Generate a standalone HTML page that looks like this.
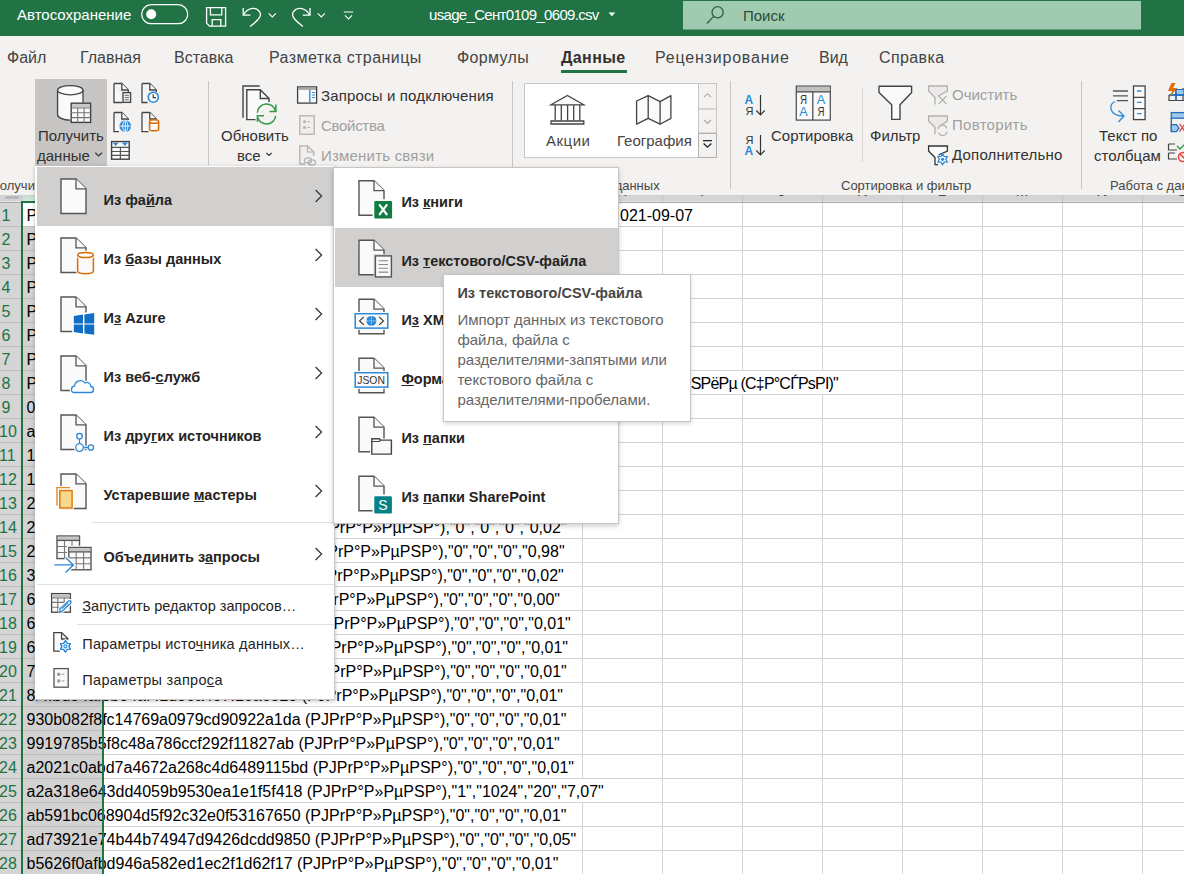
<!DOCTYPE html>
<html><head><meta charset="utf-8">
<style>
*{margin:0;padding:0;box-sizing:border-box}
html,body{width:1184px;height:874px;overflow:hidden;background:#fff;font-family:"Liberation Sans",sans-serif;color:#323130}
.a{position:absolute;white-space:nowrap}
svg{position:absolute;overflow:visible}
#title{position:absolute;left:0;top:0;width:1184px;height:36px;background:#217346}
#tabs{position:absolute;left:0;top:36px;width:1184px;height:40px;background:#f3f2f1}
#ribbon{position:absolute;left:0;top:76px;width:1184px;height:119px;background:#f3f2f1}
.tab{font-size:16px;color:#444;top:49px}
.rl{font-size:15px;color:#323130}
.dis{color:#a19f9d}
.gl{font-size:13px;color:#484644;top:177.5px}
.sep{position:absolute;width:1px;background:#c8c6c4}
.cell{font-size:16px;color:#000}
.rh{font-size:16px;color:#217346;width:14px;text-align:center}
.mi{font-size:14.5px;font-weight:bold;color:#252423}
.mr{font-size:14.5px;color:#252423}
</style></head><body>
<!-- ===== GRID ===== -->
<div id="grid" style="position:absolute;left:0;top:0;width:1184px;height:874px">
<div class="a" style="left:0;top:195px;width:1184px;height:7px;background:linear-gradient(#cdcdcd 0,#d4d4d4 1px,#d4d4d4 5.5px,#e6e6e6 6px)"></div>
<div class="a" style="left:23px;top:195px;width:80px;height:7px;background:linear-gradient(#c6dccf,#d3ecdd)"></div>
<div class="a" style="left:42px;width:40px;text-align:center;top:182px;font-size:15px;color:#444">A</div>
<div class="a" style="left:122px;width:40px;text-align:center;top:182px;font-size:15px;color:#444">B</div>
<div class="a" style="left:202px;width:40px;text-align:center;top:182px;font-size:15px;color:#444">C</div>
<div class="a" style="left:282px;width:40px;text-align:center;top:182px;font-size:15px;color:#444">D</div>
<div class="a" style="left:362px;width:40px;text-align:center;top:182px;font-size:15px;color:#444">E</div>
<div class="a" style="left:442px;width:40px;text-align:center;top:182px;font-size:15px;color:#444">F</div>
<div class="a" style="left:522px;width:40px;text-align:center;top:182px;font-size:15px;color:#444">G</div>
<div class="a" style="left:602px;width:40px;text-align:center;top:182px;font-size:15px;color:#444">H</div>
<div class="a" style="left:682px;width:40px;text-align:center;top:182px;font-size:15px;color:#444">I</div>
<div class="a" style="left:762px;width:40px;text-align:center;top:182px;font-size:15px;color:#444">J</div>
<div class="a" style="left:842px;width:40px;text-align:center;top:182px;font-size:15px;color:#444">K</div>
<div class="a" style="left:922px;width:40px;text-align:center;top:182px;font-size:15px;color:#444">L</div>
<div class="a" style="left:1002px;width:40px;text-align:center;top:182px;font-size:15px;color:#444">M</div>
<div class="a" style="left:1082px;width:40px;text-align:center;top:182px;font-size:15px;color:#444">N</div>
<div class="a" style="left:1162px;width:40px;text-align:center;top:182px;font-size:15px;color:#444">O</div>
<div class="a" style="left:0;top:203px;width:21px;height:671px;background:#d5d5d5"></div>
<div class="a" style="left:23px;top:203px;width:79px;height:671px;background:#d2d2d2"></div>
<div class="a" style="left:23px;top:203px;width:79px;height:23px;background:#fff"></div>
<div class="a rh" style="left:-1px;top:207px">1</div>
<div class="a rh" style="left:-1px;top:231px">2</div>
<div class="a rh" style="left:-1px;top:255px">3</div>
<div class="a rh" style="left:-1px;top:279px">4</div>
<div class="a rh" style="left:-1px;top:303px">5</div>
<div class="a rh" style="left:-1px;top:327px">6</div>
<div class="a rh" style="left:-1px;top:351px">7</div>
<div class="a rh" style="left:-1px;top:375px">8</div>
<div class="a rh" style="left:-1px;top:399px">9</div>
<div class="a rh" style="left:-1px;top:423px">10</div>
<div class="a rh" style="left:-1px;top:447px">11</div>
<div class="a rh" style="left:-1px;top:471px">12</div>
<div class="a rh" style="left:-1px;top:495px">13</div>
<div class="a rh" style="left:-1px;top:519px">14</div>
<div class="a rh" style="left:-1px;top:543px">15</div>
<div class="a rh" style="left:-1px;top:567px">16</div>
<div class="a rh" style="left:-1px;top:591px">17</div>
<div class="a rh" style="left:-1px;top:615px">18</div>
<div class="a rh" style="left:-1px;top:639px">19</div>
<div class="a rh" style="left:-1px;top:663px">20</div>
<div class="a rh" style="left:-1px;top:687px">21</div>
<div class="a rh" style="left:-1px;top:711px">22</div>
<div class="a rh" style="left:-1px;top:735px">23</div>
<div class="a rh" style="left:-1px;top:759px">24</div>
<div class="a rh" style="left:-1px;top:783px">25</div>
<div class="a rh" style="left:-1px;top:807px">26</div>
<div class="a rh" style="left:-1px;top:831px">27</div>
<div class="a rh" style="left:-1px;top:855px">28</div>
<div class="a cell" style="left:26.5px;top:207px">P</div>
<div class="a" style="left:36px;top:203px;width:659px;height:23px;overflow:hidden"><div class="a cell" style="right:2px;top:4px;">PJPrP°P»PµPSP° 021-09-07</div></div>
<div class="a cell" style="left:26.5px;top:231px">P</div>
<div class="a cell" style="left:26.5px;top:255px">P</div>
<div class="a cell" style="left:26.5px;top:279px">P</div>
<div class="a cell" style="left:26.5px;top:303px">P</div>
<div class="a cell" style="left:26.5px;top:327px">P</div>
<div class="a cell" style="left:26.5px;top:351px">P</div>
<div class="a cell" style="left:26.5px;top:375px">P</div>
<div class="a" style="left:36px;top:371px;width:804px;height:23px;overflow:hidden"><div class="a cell" style="right:2px;top:4px;letter-spacing:-0.8px">PsPiP°PSPёPµ (C‡P°CЃPsPI)&quot;</div></div>
<div class="a cell" style="left:26.5px;top:399px">0</div>
<div class="a cell" style="left:26.5px;top:423px">a</div>
<div class="a cell" style="left:26.5px;top:447px">1</div>
<div class="a cell" style="left:26.5px;top:471px">1</div>
<div class="a cell" style="left:26.5px;top:495px">2</div>
<div class="a cell" style="left:26.5px;top:519px">2</div>
<div class="a" style="left:36px;top:515px;width:532.5px;height:23px;overflow:hidden"><div class="a cell" style="right:2px;top:4px;">d2 (PJPrP°P»PµPSP°),&quot;0&quot;,&quot;0&quot;,&quot;0&quot;,&quot;0,02&quot;</div></div>
<div class="a cell" style="left:26.5px;top:543px">2</div>
<div class="a" style="left:36px;top:539px;width:530.6px;height:23px;overflow:hidden"><div class="a cell" style="right:2px;top:4px;">d2 (PJPrP°P»PµPSP°),&quot;0&quot;,&quot;0&quot;,&quot;0&quot;,&quot;0,98&quot;</div></div>
<div class="a cell" style="left:26.5px;top:567px">3</div>
<div class="a" style="left:36px;top:563px;width:529.8px;height:23px;overflow:hidden"><div class="a cell" style="right:2px;top:4px;">d2 (PJPrP°P»PµPSP°),&quot;0&quot;,&quot;0&quot;,&quot;0&quot;,&quot;0,02&quot;</div></div>
<div class="a cell" style="left:26.5px;top:591px">6</div>
<div class="a" style="left:36px;top:587px;width:526px;height:23px;overflow:hidden"><div class="a cell" style="right:2px;top:4px;">d2 (PJPrP°P»PµPSP°),&quot;0&quot;,&quot;0&quot;,&quot;0&quot;,&quot;0,00&quot;</div></div>
<div class="a cell" style="left:26.5px;top:615px">6</div>
<div class="a" style="left:36px;top:611px;width:536.8px;height:23px;overflow:hidden"><div class="a cell" style="right:2px;top:4px;">d2 (PJPrP°P»PµPSP°),&quot;0&quot;,&quot;0&quot;,&quot;0&quot;,&quot;0,01&quot;</div></div>
<div class="a cell" style="left:26.5px;top:639px">6</div>
<div class="a" style="left:36px;top:635px;width:534px;height:23px;overflow:hidden"><div class="a cell" style="right:2px;top:4px;">d2 (PJPrP°P»PµPSP°),&quot;0&quot;,&quot;0&quot;,&quot;0&quot;,&quot;0,01&quot;</div></div>
<div class="a cell" style="left:26.5px;top:663px">7</div>
<div class="a" style="left:36px;top:659px;width:532.8px;height:23px;overflow:hidden"><div class="a cell" style="right:2px;top:4px;">d2 (PJPrP°P»PµPSP°),&quot;0&quot;,&quot;0&quot;,&quot;0&quot;,&quot;0,01&quot;</div></div>
<div class="a cell" style="left:26.5px;top:687px">8</div>
<div class="a" style="left:36px;top:683px;width:529px;height:23px;overflow:hidden"><div class="a cell" style="right:2px;top:4px;">84fbd54af3b04af41d0ea457f1ea6020 (PJPrP°P»PµPSP°),&quot;0&quot;,&quot;0&quot;,&quot;0&quot;,&quot;0,01&quot;</div></div>
<div class="a cell" style="left:26.5px;top:711px">930b082f8fc14769a0979cd90922a1da (PJPrP°P»PµPSP°),&quot;0&quot;,&quot;0&quot;,&quot;0&quot;,&quot;0,01&quot;</div>
<div class="a cell" style="left:26.5px;top:735px">9919785b5f8c48a786ccf292f11827ab (PJPrP°P»PµPSP°),&quot;0&quot;,&quot;0&quot;,&quot;0&quot;,&quot;0,01&quot;</div>
<div class="a cell" style="left:26.5px;top:759px">a2021c0abd7a4672a268c4d6489115bd (PJPrP°P»PµPSP°),&quot;0&quot;,&quot;0&quot;,&quot;0&quot;,&quot;0,01&quot;</div>
<div class="a cell" style="left:26.5px;top:783px">a2a318e643dd4059b9530ea1e1f5f418 (PJPrP°P»PµPSP°),&quot;1&quot;,&quot;1024&quot;,&quot;20&quot;,&quot;7,07&quot;</div>
<div class="a cell" style="left:26.5px;top:807px">ab591bc068904d5f92c32e0f53167650 (PJPrP°P»PµPSP°),&quot;0&quot;,&quot;0&quot;,&quot;0&quot;,&quot;0,01&quot;</div>
<div class="a cell" style="left:26.5px;top:831px">ad73921e74b44b74947d9426dcdd9850 (PJPrP°P»PµPSP°),&quot;0&quot;,&quot;0&quot;,&quot;0&quot;,&quot;0,05&quot;</div>
<div class="a cell" style="left:26.5px;top:855px">b5626f0afbd946a582ed1ec2f1d62f17 (PJPrP°P»PµPSP°),&quot;0&quot;,&quot;0&quot;,&quot;0&quot;,&quot;0,01&quot;</div>
<svg style="left:0;top:0" width="1184" height="874"><path d="M4 198.8 L6.5 196.3 H19 V198.8 Z" fill="#b4b4b4"/><rect x="0" y="202" width="1184" height="1" fill="#a8a8a8"/><rect x="21" y="195" width="1" height="7" fill="#c6c6c6"/><rect x="102" y="195" width="1" height="7" fill="#c6c6c6"/><rect x="182" y="195" width="1" height="7" fill="#c6c6c6"/><rect x="262" y="195" width="1" height="7" fill="#c6c6c6"/><rect x="342" y="195" width="1" height="7" fill="#c6c6c6"/><rect x="422" y="195" width="1" height="7" fill="#c6c6c6"/><rect x="502" y="195" width="1" height="7" fill="#c6c6c6"/><rect x="582" y="195" width="1" height="7" fill="#c6c6c6"/><rect x="662" y="195" width="1" height="7" fill="#c6c6c6"/><rect x="742" y="195" width="1" height="7" fill="#c6c6c6"/><rect x="822" y="195" width="1" height="7" fill="#c6c6c6"/><rect x="902" y="195" width="1" height="7" fill="#c6c6c6"/><rect x="982" y="195" width="1" height="7" fill="#c6c6c6"/><rect x="1062" y="195" width="1" height="7" fill="#c6c6c6"/><rect x="1142" y="195" width="1" height="7" fill="#c6c6c6"/><rect x="0" y="226" width="21" height="1" fill="#bdbdbd"/><rect x="23" y="226" width="79" height="1" fill="#bdbdbd"/><rect x="104" y="226" width="1080" height="1" fill="#d4d4d4"/><rect x="0" y="250" width="21" height="1" fill="#bdbdbd"/><rect x="23" y="250" width="79" height="1" fill="#bdbdbd"/><rect x="104" y="250" width="1080" height="1" fill="#d4d4d4"/><rect x="0" y="274" width="21" height="1" fill="#bdbdbd"/><rect x="23" y="274" width="79" height="1" fill="#bdbdbd"/><rect x="104" y="274" width="1080" height="1" fill="#d4d4d4"/><rect x="0" y="298" width="21" height="1" fill="#bdbdbd"/><rect x="23" y="298" width="79" height="1" fill="#bdbdbd"/><rect x="104" y="298" width="1080" height="1" fill="#d4d4d4"/><rect x="0" y="322" width="21" height="1" fill="#bdbdbd"/><rect x="23" y="322" width="79" height="1" fill="#bdbdbd"/><rect x="104" y="322" width="1080" height="1" fill="#d4d4d4"/><rect x="0" y="346" width="21" height="1" fill="#bdbdbd"/><rect x="23" y="346" width="79" height="1" fill="#bdbdbd"/><rect x="104" y="346" width="1080" height="1" fill="#d4d4d4"/><rect x="0" y="370" width="21" height="1" fill="#bdbdbd"/><rect x="23" y="370" width="79" height="1" fill="#bdbdbd"/><rect x="104" y="370" width="1080" height="1" fill="#d4d4d4"/><rect x="0" y="394" width="21" height="1" fill="#bdbdbd"/><rect x="23" y="394" width="79" height="1" fill="#bdbdbd"/><rect x="104" y="394" width="1080" height="1" fill="#d4d4d4"/><rect x="0" y="418" width="21" height="1" fill="#bdbdbd"/><rect x="23" y="418" width="79" height="1" fill="#bdbdbd"/><rect x="104" y="418" width="1080" height="1" fill="#d4d4d4"/><rect x="0" y="442" width="21" height="1" fill="#bdbdbd"/><rect x="23" y="442" width="79" height="1" fill="#bdbdbd"/><rect x="104" y="442" width="1080" height="1" fill="#d4d4d4"/><rect x="0" y="466" width="21" height="1" fill="#bdbdbd"/><rect x="23" y="466" width="79" height="1" fill="#bdbdbd"/><rect x="104" y="466" width="1080" height="1" fill="#d4d4d4"/><rect x="0" y="490" width="21" height="1" fill="#bdbdbd"/><rect x="23" y="490" width="79" height="1" fill="#bdbdbd"/><rect x="104" y="490" width="1080" height="1" fill="#d4d4d4"/><rect x="0" y="514" width="21" height="1" fill="#bdbdbd"/><rect x="23" y="514" width="79" height="1" fill="#bdbdbd"/><rect x="104" y="514" width="1080" height="1" fill="#d4d4d4"/><rect x="0" y="538" width="21" height="1" fill="#bdbdbd"/><rect x="23" y="538" width="79" height="1" fill="#bdbdbd"/><rect x="104" y="538" width="1080" height="1" fill="#d4d4d4"/><rect x="0" y="562" width="21" height="1" fill="#bdbdbd"/><rect x="23" y="562" width="79" height="1" fill="#bdbdbd"/><rect x="104" y="562" width="1080" height="1" fill="#d4d4d4"/><rect x="0" y="586" width="21" height="1" fill="#bdbdbd"/><rect x="23" y="586" width="79" height="1" fill="#bdbdbd"/><rect x="104" y="586" width="1080" height="1" fill="#d4d4d4"/><rect x="0" y="610" width="21" height="1" fill="#bdbdbd"/><rect x="23" y="610" width="79" height="1" fill="#bdbdbd"/><rect x="104" y="610" width="1080" height="1" fill="#d4d4d4"/><rect x="0" y="634" width="21" height="1" fill="#bdbdbd"/><rect x="23" y="634" width="79" height="1" fill="#bdbdbd"/><rect x="104" y="634" width="1080" height="1" fill="#d4d4d4"/><rect x="0" y="658" width="21" height="1" fill="#bdbdbd"/><rect x="23" y="658" width="79" height="1" fill="#bdbdbd"/><rect x="104" y="658" width="1080" height="1" fill="#d4d4d4"/><rect x="0" y="682" width="21" height="1" fill="#bdbdbd"/><rect x="23" y="682" width="79" height="1" fill="#bdbdbd"/><rect x="104" y="682" width="1080" height="1" fill="#d4d4d4"/><rect x="0" y="706" width="21" height="1" fill="#bdbdbd"/><rect x="23" y="706" width="79" height="1" fill="#bdbdbd"/><rect x="104" y="706" width="1080" height="1" fill="#d4d4d4"/><rect x="0" y="730" width="21" height="1" fill="#bdbdbd"/><rect x="23" y="730" width="79" height="1" fill="#bdbdbd"/><rect x="104" y="730" width="1080" height="1" fill="#d4d4d4"/><rect x="0" y="754" width="21" height="1" fill="#bdbdbd"/><rect x="23" y="754" width="79" height="1" fill="#bdbdbd"/><rect x="104" y="754" width="1080" height="1" fill="#d4d4d4"/><rect x="0" y="778" width="21" height="1" fill="#bdbdbd"/><rect x="23" y="778" width="79" height="1" fill="#bdbdbd"/><rect x="104" y="778" width="1080" height="1" fill="#d4d4d4"/><rect x="0" y="802" width="21" height="1" fill="#bdbdbd"/><rect x="23" y="802" width="79" height="1" fill="#bdbdbd"/><rect x="104" y="802" width="1080" height="1" fill="#d4d4d4"/><rect x="0" y="826" width="21" height="1" fill="#bdbdbd"/><rect x="23" y="826" width="79" height="1" fill="#bdbdbd"/><rect x="104" y="826" width="1080" height="1" fill="#d4d4d4"/><rect x="0" y="850" width="21" height="1" fill="#bdbdbd"/><rect x="23" y="850" width="79" height="1" fill="#bdbdbd"/><rect x="104" y="850" width="1080" height="1" fill="#d4d4d4"/><rect x="0" y="874" width="21" height="1" fill="#bdbdbd"/><rect x="23" y="874" width="79" height="1" fill="#bdbdbd"/><rect x="104" y="874" width="1080" height="1" fill="#d4d4d4"/><rect x="742" y="203" width="1" height="23" fill="#d4d4d4"/><rect x="822" y="203" width="1" height="23" fill="#d4d4d4"/><rect x="902" y="203" width="1" height="23" fill="#d4d4d4"/><rect x="982" y="203" width="1" height="23" fill="#d4d4d4"/><rect x="1062" y="203" width="1" height="23" fill="#d4d4d4"/><rect x="1142" y="203" width="1" height="23" fill="#d4d4d4"/><rect x="182" y="227" width="1" height="23" fill="#d4d4d4"/><rect x="262" y="227" width="1" height="23" fill="#d4d4d4"/><rect x="342" y="227" width="1" height="23" fill="#d4d4d4"/><rect x="422" y="227" width="1" height="23" fill="#d4d4d4"/><rect x="502" y="227" width="1" height="23" fill="#d4d4d4"/><rect x="582" y="227" width="1" height="23" fill="#d4d4d4"/><rect x="662" y="227" width="1" height="23" fill="#d4d4d4"/><rect x="742" y="227" width="1" height="23" fill="#d4d4d4"/><rect x="822" y="227" width="1" height="23" fill="#d4d4d4"/><rect x="902" y="227" width="1" height="23" fill="#d4d4d4"/><rect x="982" y="227" width="1" height="23" fill="#d4d4d4"/><rect x="1062" y="227" width="1" height="23" fill="#d4d4d4"/><rect x="1142" y="227" width="1" height="23" fill="#d4d4d4"/><rect x="182" y="251" width="1" height="23" fill="#d4d4d4"/><rect x="262" y="251" width="1" height="23" fill="#d4d4d4"/><rect x="342" y="251" width="1" height="23" fill="#d4d4d4"/><rect x="422" y="251" width="1" height="23" fill="#d4d4d4"/><rect x="502" y="251" width="1" height="23" fill="#d4d4d4"/><rect x="582" y="251" width="1" height="23" fill="#d4d4d4"/><rect x="662" y="251" width="1" height="23" fill="#d4d4d4"/><rect x="742" y="251" width="1" height="23" fill="#d4d4d4"/><rect x="822" y="251" width="1" height="23" fill="#d4d4d4"/><rect x="902" y="251" width="1" height="23" fill="#d4d4d4"/><rect x="982" y="251" width="1" height="23" fill="#d4d4d4"/><rect x="1062" y="251" width="1" height="23" fill="#d4d4d4"/><rect x="1142" y="251" width="1" height="23" fill="#d4d4d4"/><rect x="182" y="275" width="1" height="23" fill="#d4d4d4"/><rect x="262" y="275" width="1" height="23" fill="#d4d4d4"/><rect x="342" y="275" width="1" height="23" fill="#d4d4d4"/><rect x="422" y="275" width="1" height="23" fill="#d4d4d4"/><rect x="502" y="275" width="1" height="23" fill="#d4d4d4"/><rect x="582" y="275" width="1" height="23" fill="#d4d4d4"/><rect x="662" y="275" width="1" height="23" fill="#d4d4d4"/><rect x="742" y="275" width="1" height="23" fill="#d4d4d4"/><rect x="822" y="275" width="1" height="23" fill="#d4d4d4"/><rect x="902" y="275" width="1" height="23" fill="#d4d4d4"/><rect x="982" y="275" width="1" height="23" fill="#d4d4d4"/><rect x="1062" y="275" width="1" height="23" fill="#d4d4d4"/><rect x="1142" y="275" width="1" height="23" fill="#d4d4d4"/><rect x="182" y="299" width="1" height="23" fill="#d4d4d4"/><rect x="262" y="299" width="1" height="23" fill="#d4d4d4"/><rect x="342" y="299" width="1" height="23" fill="#d4d4d4"/><rect x="422" y="299" width="1" height="23" fill="#d4d4d4"/><rect x="502" y="299" width="1" height="23" fill="#d4d4d4"/><rect x="582" y="299" width="1" height="23" fill="#d4d4d4"/><rect x="662" y="299" width="1" height="23" fill="#d4d4d4"/><rect x="742" y="299" width="1" height="23" fill="#d4d4d4"/><rect x="822" y="299" width="1" height="23" fill="#d4d4d4"/><rect x="902" y="299" width="1" height="23" fill="#d4d4d4"/><rect x="982" y="299" width="1" height="23" fill="#d4d4d4"/><rect x="1062" y="299" width="1" height="23" fill="#d4d4d4"/><rect x="1142" y="299" width="1" height="23" fill="#d4d4d4"/><rect x="182" y="323" width="1" height="23" fill="#d4d4d4"/><rect x="262" y="323" width="1" height="23" fill="#d4d4d4"/><rect x="342" y="323" width="1" height="23" fill="#d4d4d4"/><rect x="422" y="323" width="1" height="23" fill="#d4d4d4"/><rect x="502" y="323" width="1" height="23" fill="#d4d4d4"/><rect x="582" y="323" width="1" height="23" fill="#d4d4d4"/><rect x="662" y="323" width="1" height="23" fill="#d4d4d4"/><rect x="742" y="323" width="1" height="23" fill="#d4d4d4"/><rect x="822" y="323" width="1" height="23" fill="#d4d4d4"/><rect x="902" y="323" width="1" height="23" fill="#d4d4d4"/><rect x="982" y="323" width="1" height="23" fill="#d4d4d4"/><rect x="1062" y="323" width="1" height="23" fill="#d4d4d4"/><rect x="1142" y="323" width="1" height="23" fill="#d4d4d4"/><rect x="182" y="347" width="1" height="23" fill="#d4d4d4"/><rect x="262" y="347" width="1" height="23" fill="#d4d4d4"/><rect x="342" y="347" width="1" height="23" fill="#d4d4d4"/><rect x="422" y="347" width="1" height="23" fill="#d4d4d4"/><rect x="502" y="347" width="1" height="23" fill="#d4d4d4"/><rect x="582" y="347" width="1" height="23" fill="#d4d4d4"/><rect x="662" y="347" width="1" height="23" fill="#d4d4d4"/><rect x="742" y="347" width="1" height="23" fill="#d4d4d4"/><rect x="822" y="347" width="1" height="23" fill="#d4d4d4"/><rect x="902" y="347" width="1" height="23" fill="#d4d4d4"/><rect x="982" y="347" width="1" height="23" fill="#d4d4d4"/><rect x="1062" y="347" width="1" height="23" fill="#d4d4d4"/><rect x="1142" y="347" width="1" height="23" fill="#d4d4d4"/><rect x="902" y="371" width="1" height="23" fill="#d4d4d4"/><rect x="982" y="371" width="1" height="23" fill="#d4d4d4"/><rect x="1062" y="371" width="1" height="23" fill="#d4d4d4"/><rect x="1142" y="371" width="1" height="23" fill="#d4d4d4"/><rect x="182" y="395" width="1" height="23" fill="#d4d4d4"/><rect x="262" y="395" width="1" height="23" fill="#d4d4d4"/><rect x="342" y="395" width="1" height="23" fill="#d4d4d4"/><rect x="422" y="395" width="1" height="23" fill="#d4d4d4"/><rect x="502" y="395" width="1" height="23" fill="#d4d4d4"/><rect x="582" y="395" width="1" height="23" fill="#d4d4d4"/><rect x="662" y="395" width="1" height="23" fill="#d4d4d4"/><rect x="742" y="395" width="1" height="23" fill="#d4d4d4"/><rect x="822" y="395" width="1" height="23" fill="#d4d4d4"/><rect x="902" y="395" width="1" height="23" fill="#d4d4d4"/><rect x="982" y="395" width="1" height="23" fill="#d4d4d4"/><rect x="1062" y="395" width="1" height="23" fill="#d4d4d4"/><rect x="1142" y="395" width="1" height="23" fill="#d4d4d4"/><rect x="182" y="419" width="1" height="23" fill="#d4d4d4"/><rect x="262" y="419" width="1" height="23" fill="#d4d4d4"/><rect x="342" y="419" width="1" height="23" fill="#d4d4d4"/><rect x="422" y="419" width="1" height="23" fill="#d4d4d4"/><rect x="502" y="419" width="1" height="23" fill="#d4d4d4"/><rect x="582" y="419" width="1" height="23" fill="#d4d4d4"/><rect x="662" y="419" width="1" height="23" fill="#d4d4d4"/><rect x="742" y="419" width="1" height="23" fill="#d4d4d4"/><rect x="822" y="419" width="1" height="23" fill="#d4d4d4"/><rect x="902" y="419" width="1" height="23" fill="#d4d4d4"/><rect x="982" y="419" width="1" height="23" fill="#d4d4d4"/><rect x="1062" y="419" width="1" height="23" fill="#d4d4d4"/><rect x="1142" y="419" width="1" height="23" fill="#d4d4d4"/><rect x="182" y="443" width="1" height="23" fill="#d4d4d4"/><rect x="262" y="443" width="1" height="23" fill="#d4d4d4"/><rect x="342" y="443" width="1" height="23" fill="#d4d4d4"/><rect x="422" y="443" width="1" height="23" fill="#d4d4d4"/><rect x="502" y="443" width="1" height="23" fill="#d4d4d4"/><rect x="582" y="443" width="1" height="23" fill="#d4d4d4"/><rect x="662" y="443" width="1" height="23" fill="#d4d4d4"/><rect x="742" y="443" width="1" height="23" fill="#d4d4d4"/><rect x="822" y="443" width="1" height="23" fill="#d4d4d4"/><rect x="902" y="443" width="1" height="23" fill="#d4d4d4"/><rect x="982" y="443" width="1" height="23" fill="#d4d4d4"/><rect x="1062" y="443" width="1" height="23" fill="#d4d4d4"/><rect x="1142" y="443" width="1" height="23" fill="#d4d4d4"/><rect x="182" y="467" width="1" height="23" fill="#d4d4d4"/><rect x="262" y="467" width="1" height="23" fill="#d4d4d4"/><rect x="342" y="467" width="1" height="23" fill="#d4d4d4"/><rect x="422" y="467" width="1" height="23" fill="#d4d4d4"/><rect x="502" y="467" width="1" height="23" fill="#d4d4d4"/><rect x="582" y="467" width="1" height="23" fill="#d4d4d4"/><rect x="662" y="467" width="1" height="23" fill="#d4d4d4"/><rect x="742" y="467" width="1" height="23" fill="#d4d4d4"/><rect x="822" y="467" width="1" height="23" fill="#d4d4d4"/><rect x="902" y="467" width="1" height="23" fill="#d4d4d4"/><rect x="982" y="467" width="1" height="23" fill="#d4d4d4"/><rect x="1062" y="467" width="1" height="23" fill="#d4d4d4"/><rect x="1142" y="467" width="1" height="23" fill="#d4d4d4"/><rect x="182" y="491" width="1" height="23" fill="#d4d4d4"/><rect x="262" y="491" width="1" height="23" fill="#d4d4d4"/><rect x="342" y="491" width="1" height="23" fill="#d4d4d4"/><rect x="422" y="491" width="1" height="23" fill="#d4d4d4"/><rect x="502" y="491" width="1" height="23" fill="#d4d4d4"/><rect x="582" y="491" width="1" height="23" fill="#d4d4d4"/><rect x="662" y="491" width="1" height="23" fill="#d4d4d4"/><rect x="742" y="491" width="1" height="23" fill="#d4d4d4"/><rect x="822" y="491" width="1" height="23" fill="#d4d4d4"/><rect x="902" y="491" width="1" height="23" fill="#d4d4d4"/><rect x="982" y="491" width="1" height="23" fill="#d4d4d4"/><rect x="1062" y="491" width="1" height="23" fill="#d4d4d4"/><rect x="1142" y="491" width="1" height="23" fill="#d4d4d4"/><rect x="582" y="515" width="1" height="23" fill="#d4d4d4"/><rect x="662" y="515" width="1" height="23" fill="#d4d4d4"/><rect x="742" y="515" width="1" height="23" fill="#d4d4d4"/><rect x="822" y="515" width="1" height="23" fill="#d4d4d4"/><rect x="902" y="515" width="1" height="23" fill="#d4d4d4"/><rect x="982" y="515" width="1" height="23" fill="#d4d4d4"/><rect x="1062" y="515" width="1" height="23" fill="#d4d4d4"/><rect x="1142" y="515" width="1" height="23" fill="#d4d4d4"/><rect x="582" y="539" width="1" height="23" fill="#d4d4d4"/><rect x="662" y="539" width="1" height="23" fill="#d4d4d4"/><rect x="742" y="539" width="1" height="23" fill="#d4d4d4"/><rect x="822" y="539" width="1" height="23" fill="#d4d4d4"/><rect x="902" y="539" width="1" height="23" fill="#d4d4d4"/><rect x="982" y="539" width="1" height="23" fill="#d4d4d4"/><rect x="1062" y="539" width="1" height="23" fill="#d4d4d4"/><rect x="1142" y="539" width="1" height="23" fill="#d4d4d4"/><rect x="582" y="563" width="1" height="23" fill="#d4d4d4"/><rect x="662" y="563" width="1" height="23" fill="#d4d4d4"/><rect x="742" y="563" width="1" height="23" fill="#d4d4d4"/><rect x="822" y="563" width="1" height="23" fill="#d4d4d4"/><rect x="902" y="563" width="1" height="23" fill="#d4d4d4"/><rect x="982" y="563" width="1" height="23" fill="#d4d4d4"/><rect x="1062" y="563" width="1" height="23" fill="#d4d4d4"/><rect x="1142" y="563" width="1" height="23" fill="#d4d4d4"/><rect x="582" y="587" width="1" height="23" fill="#d4d4d4"/><rect x="662" y="587" width="1" height="23" fill="#d4d4d4"/><rect x="742" y="587" width="1" height="23" fill="#d4d4d4"/><rect x="822" y="587" width="1" height="23" fill="#d4d4d4"/><rect x="902" y="587" width="1" height="23" fill="#d4d4d4"/><rect x="982" y="587" width="1" height="23" fill="#d4d4d4"/><rect x="1062" y="587" width="1" height="23" fill="#d4d4d4"/><rect x="1142" y="587" width="1" height="23" fill="#d4d4d4"/><rect x="582" y="611" width="1" height="23" fill="#d4d4d4"/><rect x="662" y="611" width="1" height="23" fill="#d4d4d4"/><rect x="742" y="611" width="1" height="23" fill="#d4d4d4"/><rect x="822" y="611" width="1" height="23" fill="#d4d4d4"/><rect x="902" y="611" width="1" height="23" fill="#d4d4d4"/><rect x="982" y="611" width="1" height="23" fill="#d4d4d4"/><rect x="1062" y="611" width="1" height="23" fill="#d4d4d4"/><rect x="1142" y="611" width="1" height="23" fill="#d4d4d4"/><rect x="582" y="635" width="1" height="23" fill="#d4d4d4"/><rect x="662" y="635" width="1" height="23" fill="#d4d4d4"/><rect x="742" y="635" width="1" height="23" fill="#d4d4d4"/><rect x="822" y="635" width="1" height="23" fill="#d4d4d4"/><rect x="902" y="635" width="1" height="23" fill="#d4d4d4"/><rect x="982" y="635" width="1" height="23" fill="#d4d4d4"/><rect x="1062" y="635" width="1" height="23" fill="#d4d4d4"/><rect x="1142" y="635" width="1" height="23" fill="#d4d4d4"/><rect x="582" y="659" width="1" height="23" fill="#d4d4d4"/><rect x="662" y="659" width="1" height="23" fill="#d4d4d4"/><rect x="742" y="659" width="1" height="23" fill="#d4d4d4"/><rect x="822" y="659" width="1" height="23" fill="#d4d4d4"/><rect x="902" y="659" width="1" height="23" fill="#d4d4d4"/><rect x="982" y="659" width="1" height="23" fill="#d4d4d4"/><rect x="1062" y="659" width="1" height="23" fill="#d4d4d4"/><rect x="1142" y="659" width="1" height="23" fill="#d4d4d4"/><rect x="582" y="683" width="1" height="23" fill="#d4d4d4"/><rect x="662" y="683" width="1" height="23" fill="#d4d4d4"/><rect x="742" y="683" width="1" height="23" fill="#d4d4d4"/><rect x="822" y="683" width="1" height="23" fill="#d4d4d4"/><rect x="902" y="683" width="1" height="23" fill="#d4d4d4"/><rect x="982" y="683" width="1" height="23" fill="#d4d4d4"/><rect x="1062" y="683" width="1" height="23" fill="#d4d4d4"/><rect x="1142" y="683" width="1" height="23" fill="#d4d4d4"/><rect x="582" y="707" width="1" height="23" fill="#d4d4d4"/><rect x="662" y="707" width="1" height="23" fill="#d4d4d4"/><rect x="742" y="707" width="1" height="23" fill="#d4d4d4"/><rect x="822" y="707" width="1" height="23" fill="#d4d4d4"/><rect x="902" y="707" width="1" height="23" fill="#d4d4d4"/><rect x="982" y="707" width="1" height="23" fill="#d4d4d4"/><rect x="1062" y="707" width="1" height="23" fill="#d4d4d4"/><rect x="1142" y="707" width="1" height="23" fill="#d4d4d4"/><rect x="582" y="731" width="1" height="23" fill="#d4d4d4"/><rect x="662" y="731" width="1" height="23" fill="#d4d4d4"/><rect x="742" y="731" width="1" height="23" fill="#d4d4d4"/><rect x="822" y="731" width="1" height="23" fill="#d4d4d4"/><rect x="902" y="731" width="1" height="23" fill="#d4d4d4"/><rect x="982" y="731" width="1" height="23" fill="#d4d4d4"/><rect x="1062" y="731" width="1" height="23" fill="#d4d4d4"/><rect x="1142" y="731" width="1" height="23" fill="#d4d4d4"/><rect x="582" y="755" width="1" height="23" fill="#d4d4d4"/><rect x="662" y="755" width="1" height="23" fill="#d4d4d4"/><rect x="742" y="755" width="1" height="23" fill="#d4d4d4"/><rect x="822" y="755" width="1" height="23" fill="#d4d4d4"/><rect x="902" y="755" width="1" height="23" fill="#d4d4d4"/><rect x="982" y="755" width="1" height="23" fill="#d4d4d4"/><rect x="1062" y="755" width="1" height="23" fill="#d4d4d4"/><rect x="1142" y="755" width="1" height="23" fill="#d4d4d4"/><rect x="662" y="779" width="1" height="23" fill="#d4d4d4"/><rect x="742" y="779" width="1" height="23" fill="#d4d4d4"/><rect x="822" y="779" width="1" height="23" fill="#d4d4d4"/><rect x="902" y="779" width="1" height="23" fill="#d4d4d4"/><rect x="982" y="779" width="1" height="23" fill="#d4d4d4"/><rect x="1062" y="779" width="1" height="23" fill="#d4d4d4"/><rect x="1142" y="779" width="1" height="23" fill="#d4d4d4"/><rect x="582" y="803" width="1" height="23" fill="#d4d4d4"/><rect x="662" y="803" width="1" height="23" fill="#d4d4d4"/><rect x="742" y="803" width="1" height="23" fill="#d4d4d4"/><rect x="822" y="803" width="1" height="23" fill="#d4d4d4"/><rect x="902" y="803" width="1" height="23" fill="#d4d4d4"/><rect x="982" y="803" width="1" height="23" fill="#d4d4d4"/><rect x="1062" y="803" width="1" height="23" fill="#d4d4d4"/><rect x="1142" y="803" width="1" height="23" fill="#d4d4d4"/><rect x="582" y="827" width="1" height="23" fill="#d4d4d4"/><rect x="662" y="827" width="1" height="23" fill="#d4d4d4"/><rect x="742" y="827" width="1" height="23" fill="#d4d4d4"/><rect x="822" y="827" width="1" height="23" fill="#d4d4d4"/><rect x="902" y="827" width="1" height="23" fill="#d4d4d4"/><rect x="982" y="827" width="1" height="23" fill="#d4d4d4"/><rect x="1062" y="827" width="1" height="23" fill="#d4d4d4"/><rect x="1142" y="827" width="1" height="23" fill="#d4d4d4"/><rect x="582" y="851" width="1" height="23" fill="#d4d4d4"/><rect x="662" y="851" width="1" height="23" fill="#d4d4d4"/><rect x="742" y="851" width="1" height="23" fill="#d4d4d4"/><rect x="822" y="851" width="1" height="23" fill="#d4d4d4"/><rect x="902" y="851" width="1" height="23" fill="#d4d4d4"/><rect x="982" y="851" width="1" height="23" fill="#d4d4d4"/><rect x="1062" y="851" width="1" height="23" fill="#d4d4d4"/><rect x="1142" y="851" width="1" height="23" fill="#d4d4d4"/><rect x="21" y="201" width="83" height="2" fill="#217346"/><rect x="21" y="201" width="2" height="673" fill="#217346"/><rect x="102" y="201" width="2" height="673" fill="#217346"/></svg>
</div>

<!-- ===== TITLE BAR ===== -->
<div id="title"></div>
<div class="a" style="left:17px;top:6px;font-size:15px;color:#fff">Автосохранение</div>
<svg style="left:0;top:0" width="1184" height="36" viewBox="0 0 1184 36">
 <rect x="141.7" y="4.7" width="46" height="19" rx="9.5" fill="none" stroke="#fff" stroke-width="1.3"/>
 <circle cx="151.2" cy="14.2" r="5" fill="#fff"/>
 <g fill="none" stroke="#fff" stroke-width="1.3">
  <path d="M206.6 7.6 H225.6 V26.2 H209.5 L206.6 23.3 Z"/>
  <path d="M210.4 7.6 V14.8 H221.8 V7.6"/>
  <path d="M212.2 26.2 V19.6 H220.8 V26.2"/>
  <path d="M243.2 8 V15.2 H250.4"/>
  <path d="M243.6 14.8 C247 8.5 255 6 259 11 C262.5 15 260 19 250 26.5"/>
  <path d="M268.7 13.3 L272.3 16.9 L275.9 13.3" stroke-width="1.1"/>
  <path d="M310 8 V15.2 H302.8"/>
  <path d="M309.6 14.8 C306 8.5 298 6 294 11 C290.5 15 293 19 303 26.5"/>
  <path d="M317.7 13.3 L321.3 16.9 L324.9 13.3" stroke-width="1.1"/>
  <path d="M343.8 12 H353.2 M345 15.4 L348.5 18.9 L352 15.4" stroke-width="1.1"/>
 </g>
 <path d="M608.5 12.6 H615.3 L611.9 16.2 Z" fill="#fff"/>
 <rect x="683" y="1" width="458" height="28.5" fill="#a0cbb1"/>
 <circle cx="717.6" cy="12.3" r="5.6" fill="none" stroke="#2f5d3f" stroke-width="1.3"/>
 <path d="M713.6 16.4 L707 23.5" stroke="#2f5d3f" stroke-width="1.3"/>
</svg>
<div class="a" style="left:429px;top:6px;font-size:15px;color:#fff;letter-spacing:-0.68px">usage_Сент0109_0609.csv</div>
<div class="a" style="left:743px;top:6.5px;font-size:15px;color:#2b4a36">Поиск</div>

<!-- ===== TABS ===== -->
<div id="tabs"></div>
<div class="a tab" style="left:7px">Файл</div>
<div class="a tab" style="left:80px">Главная</div>
<div class="a tab" style="left:174px">Вставка</div>
<div class="a tab" style="left:269px;letter-spacing:0.45px">Разметка страницы</div>
<div class="a tab" style="left:457px;letter-spacing:0.35px">Формулы</div>
<div class="a tab" style="left:561px;font-weight:bold;color:#323130;letter-spacing:0.4px">Данные</div>
<div class="a" style="left:561px;top:70px;width:66px;height:3px;background:#217346"></div>
<div class="a tab" style="left:655px;letter-spacing:0.8px">Рецензирование</div>
<div class="a tab" style="left:819px">Вид</div>
<div class="a tab" style="left:879px;letter-spacing:0.4px">Справка</div>


<!-- ===== RIBBON ===== -->
<div id="ribbon"></div>
<div class="a" style="left:35px;top:79px;width:72px;height:90px;background:#c8c6c4"></div>
<div class="a rl" style="left:38px;top:127px">Получить</div>
<div class="a rl" style="left:37px;top:147px">данные</div>
<svg style="left:0;top:0" width="300" height="170"><path d="M95.3 152.8 L98.6 156 L101.9 152.8 M266.3 152.8 L269 155.5 L271.7 152.8" fill="none" stroke="#333" stroke-width="1.2"/></svg>
<div class="a rl" style="left:221px;top:127px">Обновить</div>
<div class="a rl" style="left:237px;top:147px">все</div>
<div class="a rl" style="left:321px;top:87px;letter-spacing:0.16px">Запросы и подключения</div>
<div class="a rl dis" style="left:321px;top:117px;letter-spacing:-0.3px">Свойства</div>
<div class="a rl dis" style="left:321px;top:147px;letter-spacing:0.2px">Изменить связи</div>
<div class="a" style="left:524px;top:83px;width:193px;height:75px;background:#fff;border:1px solid #c8c6c4"></div>
<div class="a rl" style="left:546px;top:132px;color:#484644;letter-spacing:0.5px">Акции</div>
<div class="a rl" style="left:617px;top:132px;color:#484644">География</div>
<div class="a rl" style="left:771px;top:127px">Сортировка</div>
<div class="a rl" style="left:870px;top:127px">Фильтр</div>
<div class="a rl dis" style="left:952px;top:86px">Очистить</div>
<div class="a rl dis" style="left:952px;top:116px;letter-spacing:0.29px">Повторить</div>
<div class="a rl" style="left:952px;top:146px;letter-spacing:0.2px">Дополнительно</div>
<div class="a rl" style="left:1099px;top:127px">Текст по</div>
<div class="a rl" style="left:1094px;top:147px">столбцам</div>
<div class="a gl" style="left:-9.5px">Получить и преобразовать данные</div>
<div class="a gl" style="left:580px">Типы данных</div>
<div class="a gl" style="left:841px">Сортировка и фильтр</div>
<div class="a gl" style="left:1110px">Работа с данными</div>
<div class="sep" style="left:208px;top:81px;height:84px"></div>
<div class="sep" style="left:512px;top:81px;height:108px"></div>
<div class="sep" style="left:730px;top:81px;height:108px"></div>
<div class="sep" style="left:862px;top:88px;height:74px;background:#d8d6d4"></div>
<div class="sep" style="left:1081px;top:81px;height:108px"></div>
<svg id="ricons" style="left:0;top:0" width="1184" height="200" viewBox="0 0 1184 200">
<g fill="none" stroke="#444" stroke-width="1.3">
 <!-- get data cylinder -->
 <path d="M57.6 90 V114.5 C57.6 117.5 63 119.8 70 120.2" fill="#fafafa"/>
 <path d="M57.6 90 V114.5 C57.6 118 64 120.3 70.9 120.3 V103 H83 V90 Z" fill="#fafafa" stroke="none"/>
 <path d="M57.6 90 V114.5 C57.6 117.5 63 119.8 70 120.2"/>
 <path d="M83 90 V102.5"/>
 <ellipse cx="70.3" cy="90.2" rx="12.7" ry="4.6" fill="#fafafa"/>
 <!-- table -->
 <rect x="71.2" y="103.2" width="19.4" height="19.2" fill="#fafafa" stroke="#404040" stroke-width="1.4"/>
 <rect x="72" y="104" width="18" height="3.6" fill="#c8c6c4" stroke="none"/>
 <path d="M71.2 108 H90.6 M71.2 112.8 H90.6 M71.2 117.6 H90.6 M77.7 108 V122.4 M84.1 108 V122.4" stroke="#777" stroke-width="1.1"/>
</g>
<g fill="#fafafa" stroke="#444" stroke-width="1.3">
 <!-- from text -->
 <path d="M114 83.5 H121.8 L128.3 90 V92.5 M122.5 102.5 H114 V83.5"/>
 <path d="M121.8 83.5 V90 H128.3" />
 <rect x="123" y="92.6" width="7.6" height="9.8" fill="#e8e8e8"/>
 <path d="M124.8 95.4 H128.8 M124.8 97.6 H128.8 M124.8 99.8 H128.8" stroke="#777" stroke-width="1"/>
 <!-- recent -->
 <path d="M142 83.5 H149.8 L156.3 90 V92 M147.5 102.5 H142 V83.5"/>
 <path d="M149.8 83.5 V90 H156.3"/>
 <circle cx="153.3" cy="97.2" r="5" fill="#fff" stroke="#2b88d8" stroke-width="1.6"/>
 <path d="M153.2 94.3 V97.6 H156" stroke="#333" stroke-width="1.1" fill="none"/>
 <!-- web -->
 <path d="M114 112.5 H121.8 L128.3 119 V120 M119 131.6 H114 V112.5"/>
 <path d="M121.8 112.5 V119 H128.3"/>
 <circle cx="125.3" cy="126.1" r="5.8" fill="#2b88d8" stroke="none"/>
 <path d="M119.8 126.1 H130.8 M125.3 120.5 V131.7" stroke="#fff" stroke-width="0.9" fill="none"/>
 <ellipse cx="125.3" cy="126.1" rx="2.6" ry="5.6" stroke="#fff" stroke-width="0.9" fill="none"/>
 <!-- existing connections -->
 <path d="M142 112.5 H149.8 L156.3 119 V120 M148.5 131.6 H142 V112.5"/>
 <path d="M149.8 112.5 V119 H156.3"/>
 <path d="M149.6 121.5 V129.5 C149.6 131.3 158.6 131.3 158.6 129.5 V121.5" stroke="#d86c00" stroke-width="1.5" fill="#fafafa"/>
 <ellipse cx="154.1" cy="121.5" rx="4.5" ry="1.8" stroke="#d86c00" stroke-width="1.5" fill="#fafafa"/>
 <!-- from table -->
 <rect x="111.6" y="141.6" width="17.6" height="17.6" stroke="#404040" stroke-width="1.4"/>
 <path d="M111.6 147.4 H129.2 M111.6 151.5 H129.2 M111.6 155.3 H129.2 M120.4 147.4 V159.2" stroke="#555" stroke-width="1.2"/>
 <path d="M113.4 143 H118 L115.7 145.6 Z M122.6 143 H127.2 L124.9 145.6 Z" fill="#2b88d8" stroke="#2b88d8" stroke-width="0.8"/>
</g>
<!-- refresh all -->
<g fill="none" stroke="#444" stroke-width="1.4">
 <path d="M243 117.8 V86 H259.7"/>
 <path d="M255.5 119.6 H246.8 V89.8 H260.3 L269 98.5 V102" fill="#fafafa"/>
 <path d="M260.3 89.8 V98.5 H269"/>
 <path d="M257.3 112.8 A9.3 9.3 0 0 1 275.6 111" stroke="#339a49" stroke-width="1.5"/>
 <path d="M275.9 104.5 V111.5 H269.5" stroke="#339a49" stroke-width="1.5"/>
 <path d="M275.7 115.8 A9.3 9.3 0 0 1 257.6 117.5" stroke="#339a49" stroke-width="1.5"/>
 <path d="M257.4 121.8 V115.8 H264" stroke="#339a49" stroke-width="1.5"/>
</g>
<!-- queries -->
<rect x="297.6" y="86.9" width="19" height="16.2" fill="#fafafa" stroke="#404040" stroke-width="1.3"/>
<rect x="298.2" y="87.5" width="17.8" height="2.4" fill="#a8a8a8"/>
<path d="M309.8 90 V102.5" stroke="#2b88d8" stroke-width="1.4"/>
<path d="M312.2 92.5 H315 M312.2 95 H315 M312.2 97.5 H315" stroke="#2b88d8" stroke-width="1.2"/>
<!-- properties (disabled) -->
<rect x="299.8" y="115.8" width="14.4" height="18.4" fill="#f0efee" stroke="#b3b1af" stroke-width="1.3"/>
<rect x="303.2" y="120.4" width="2.6" height="2.6" fill="#b3b1af"/>
<rect x="303.2" y="126.2" width="2.6" height="2.6" fill="#b3b1af"/>
<path d="M307.5 121.7 H310 M307.5 127.5 H310" stroke="#b3b1af" stroke-width="1"/>
<!-- edit links (disabled) -->
<path d="M305 164 H299.8 V145.8 H307.5 L313.8 152 V156" fill="#f0efee" stroke="#b3b1af" stroke-width="1.3"/>
<path d="M307.5 145.8 V152 H313.8" fill="none" stroke="#b3b1af" stroke-width="1.2"/>
<ellipse cx="308" cy="160.5" rx="3.6" ry="2.6" fill="none" stroke="#b3b1af" stroke-width="1.2"/>
<ellipse cx="312" cy="162.5" rx="3.6" ry="2.6" fill="none" stroke="#b3b1af" stroke-width="1.2"/>
<!-- bank -->
<g fill="#fafafa" stroke="#444" stroke-width="1.3">
 <path d="M551 104.8 L567.4 95.5 L583.8 104.8 Z"/>
 <path d="M555.2 105 V120.5 M561.3 105 V120.5 M567.6 105 V120.5 M573.7 105 V120.5 M579.8 105 V120.5" fill="none"/>
 <path d="M551 121 H583.8 V124 H551 Z"/>
</g>
<!-- map -->
<g fill="#fafafa" stroke="#444" stroke-width="1.3" stroke-linejoin="round">
 <path d="M636.6 101 L648.2 95.6 L660.1 101.6 L670.9 95.6 V118.4 L660.1 124.2 L648.2 118.4 L636.6 124.2 Z"/>
 <path d="M648.2 95.6 V118.4 M660.1 101.6 V124.2" fill="none"/>
</g>
<!-- gallery scroll -->
<rect x="698.5" y="83.5" width="18" height="74" fill="#f3f2f1" stroke="#c8c6c4" stroke-width="1"/>
<path d="M699 108.9 H716 M699 133 H716" stroke="#d2d0ce" stroke-width="1.6"/>
<rect x="698.5" y="133.5" width="18" height="24" fill="#f3f2f1" stroke="#b3b1af" stroke-width="1"/>
<path d="M704 97.2 L707.5 93.7 L711 97.2" fill="none" stroke="#a8a6a4" stroke-width="1.1"/>
<path d="M704 120 L707.5 123.5 L711 120" fill="none" stroke="#a8a6a4" stroke-width="1.1"/>
<path d="M703 140.6 H712 M703.6 143.6 L707.5 147.2 L711.4 143.6" fill="none" stroke="#222" stroke-width="1.3"/>
<!-- sort az/za -->
<g font-family="Liberation Sans" font-weight="bold">
 <text x="744.6" y="104" font-size="12" fill="#2b88d8">A</text>
 <text x="745.6" y="115.2" font-size="11" fill="#333" font-weight="normal">Я</text>
 <text x="745.6" y="143.8" font-size="11" fill="#333" font-weight="normal">Я</text>
 <text x="744.6" y="155" font-size="12" fill="#2b88d8">A</text>
</g>
<path d="M760.5 95 V114.5 M756.3 110.5 L760.5 114.8 L764.7 110.5" fill="none" stroke="#333" stroke-width="1.2"/>
<path d="M760.5 135 V154.5 M756.3 150.5 L760.5 154.8 L764.7 150.5" fill="none" stroke="#333" stroke-width="1.2"/>
<!-- sort big -->
<rect x="796.3" y="86.1" width="34" height="34" fill="#fafafa" stroke="#555" stroke-width="1.3"/>
<rect x="797" y="86.8" width="32.6" height="4.8" fill="#c0c0c0"/>
<path d="M796.3 91.8 H830.3 M812.8 91.8 V120" stroke="#444" stroke-width="1.2"/>
<g font-family="Liberation Sans" font-size="13.5" lengthAdjust="spacingAndGlyphs">
 <text x="800" y="104" fill="#333" textLength="7" lengthAdjust="spacingAndGlyphs">Я</text>
 <text x="799.3" y="116.4" fill="#2b88d8" textLength="8.5" lengthAdjust="spacingAndGlyphs">A</text>
 <text x="816.7" y="104" fill="#2b88d8" textLength="8.5" lengthAdjust="spacingAndGlyphs">A</text>
 <text x="817.6" y="116.4" fill="#333" textLength="7" lengthAdjust="spacingAndGlyphs">Я</text>
</g>
<!-- filter -->
<path d="M879 86.3 H911.6 V92.4 L900 104.8 V119.4 H891.7 V104.8 L879 92.4 Z" fill="#fafafa" stroke="#444" stroke-width="1.4" stroke-linejoin="round"/>
<!-- clear -->
<path d="M938 96 L947.4 91 V86 H928.6 V91 L935 97.5 V104.5" fill="#ebeae9" stroke="#b3b1af" stroke-width="1.3"/>
<path d="M938.5 96 L946.5 104 M946.5 96 L938.5 104" stroke="#b3b1af" stroke-width="1.2"/>
<!-- reapply -->
<path d="M940 126 L947.4 121 V116 H928.6 V121 L935 127.5 V134.5" fill="#ebeae9" stroke="#b3b1af" stroke-width="1.3"/>
<path d="M938.4 129 A4.3 4.3 0 0 1 946.8 128.3 M946.9 131.5 A4.3 4.3 0 0 1 938.5 132.3" fill="none" stroke="#b3b1af" stroke-width="1.2"/>
<!-- advanced -->
<path d="M938.5 155 L947.4 151 V146 H928.6 V151 L935 157.5 V164.6 H938" fill="#fafafa" stroke="#333" stroke-width="1.3"/>
<g transform="translate(942.6 159.3)">
 <path d="M0 -5.4 L1.6 -2.8 L4.7 -2.7 L3.2 0 L4.7 2.7 L1.6 2.8 L0 5.4 L-1.6 2.8 L-4.7 2.7 L-3.2 0 L-4.7 -2.7 L-1.6 -2.8 Z" fill="#fff" stroke="#2b88d8" stroke-width="1.2"/>
 <circle r="1.6" fill="#2b88d8"/>
</g>
<!-- text to columns -->
<path d="M1113 91 H1128 M1113 95.9 H1128 M1116.8 100.7 H1128" stroke="#555" stroke-width="1.3"/>
<path d="M1115 101.5 C1108 104 1109 116 1123.5 116 M1118.5 110.5 L1124 116 L1118.5 122" fill="none" stroke="#2b88d8" stroke-width="1.3"/>
<rect x="1133.5" y="86" width="11.6" height="33.6" fill="#fafafa" stroke="#444" stroke-width="1.3"/>
<path d="M1133.5 97.3 H1145 M1133.5 108.6 H1145" stroke="#444" stroke-width="1.2"/>
<path d="M1137 91 H1141.5 M1137 102.3 H1141.5 M1137 113.6 H1141.5" stroke="#2b88d8" stroke-width="1.3"/>
<!-- right small icons -->
<path d="M1169 95 H1184 M1169 100.5 H1184 M1169 95 V101 M1176 88 V101 M1183 88 V101" stroke="#444" stroke-width="1.2" fill="none"/>
<path d="M1176 89.5 H1184 V95 H1176 Z" fill="#9fc8ec" stroke="#1e6fc0" stroke-width="1.2"/>
<path d="M1176 92 V101 M1169 95 H1184" stroke="#1e6fc0" stroke-width="1.3"/>
<path d="M1171.5 83 L1168 91 H1172 L1170 97 L1177 88 H1173 L1175.5 83 Z" fill="#e07000"/>
<path d="M1171.3 118 V131.6" stroke="#555" stroke-width="1.3"/>
<rect x="1171.3" y="112.6" width="14" height="5.6" fill="#9fc8ec" stroke="#1e6fc0" stroke-width="1.3"/>
<path d="M1171.3 124.6 H1176.5 L1179 128.2 L1176.5 131.6 H1171.3 Z" fill="#9fc8ec" stroke="#1e6fc0" stroke-width="1.3"/>
<path d="M1179.5 123.8 L1185 131.6 M1185 123.8 L1179.5 131.6" stroke="#e8403a" stroke-width="1.2"/>
<path d="M1168.5 144 H1175 M1168.5 144 V150 H1177 M1168.5 153 H1175 M1168.5 153 V159 H1177" fill="none" stroke="#444" stroke-width="1.2"/>
<path d="M1177 146 L1180 149 L1185 144" fill="none" stroke="#2a9c3f" stroke-width="1.3"/>
<circle cx="1183" cy="157" r="4.5" fill="none" stroke="#e8403a" stroke-width="1.5"/>
<path d="M1180 154 L1186 160" stroke="#e8403a" stroke-width="1.5"/>
</svg>
<!-- ===== MAIN MENU ===== -->
<div class="a" style="left:35px;top:166px;width:300px;height:534px;background:#fff;border:1px solid #fff;border-right-color:#c8c8c8;border-bottom-color:#c8c8c8;box-shadow:0 1px 4px rgba(0,0,0,0.25)"></div>
<div class="a" style="left:37px;top:167px;width:297px;height:59px;background:#d2d0ce"></div>
<div class="a mi" style="left:103.5px;top:191.9px">Из фа<u>й</u>ла</div>
<div class="a mi" style="left:103.5px;top:250.9px">Из <u>б</u>азы данных</div>
<div class="a mi" style="left:103.5px;top:309.9px">И<u>з</u> Azure</div>
<div class="a mi" style="left:103.5px;top:368.9px">Из веб-<u>с</u>лужб</div>
<div class="a mi" style="left:103.5px;top:427.9px">Из дру<u>г</u>их источников</div>
<div class="a mi" style="left:103.5px;top:486.9px">Устаревшие <u>м</u>астеры</div>
<div class="a" style="left:92px;top:522px;width:242px;height:1px;background:#e1dfdd"></div>
<div class="a mi" style="left:103.5px;top:548.9px">Объединить з<u>а</u>просы</div>
<div class="a" style="left:37px;top:584px;width:297px;height:1px;background:#e1dfdd"></div>
<div class="a mr" style="left:82.3px;top:597.5px"><u>З</u>апустить редактор запросов…</div>
<div class="a" style="left:77px;top:624px;width:257px;height:1px;background:#e1dfdd"></div>
<div class="a mr" style="left:82.3px;top:635.9px"><span style="letter-spacing:0.17px">Параметры исто<u>ч</u>ника данных…</span></div>
<div class="a mr" style="left:82.3px;top:671.9px"><span style="letter-spacing:0.3px">Параметры запро<u>с</u>а</span></div>
<svg style="left:0;top:0" width="1184" height="874"><path d="M61 179 H76 L86 188.8 V213.5 H61 Z" fill="#fafafa" stroke="#555" stroke-width="1.4" stroke-linejoin="miter"/><path d="M76 179 V188.8 H86" fill="#fafafa" stroke="#555" stroke-width="1.3"/><path d="M61 238 H76 L86 247.8 V272.5 H61 Z" fill="#fafafa" stroke="#555" stroke-width="1.4" stroke-linejoin="miter"/><path d="M76 238 V247.8 H86" fill="#fafafa" stroke="#555" stroke-width="1.3"/><path d="M77.6 255 V271 C77.6 274.5 93.4 274.5 93.4 271 V255" fill="#fff" stroke="#fff" stroke-width="3.4"/><path d="M77.6 255 V271 C77.6 274.5 93.4 274.5 93.4 271 V255" fill="#fafafa" stroke="#d86c00" stroke-width="1.5"/><ellipse cx="85.5" cy="255" rx="7.9" ry="2.6" fill="#fff" stroke="#fff" stroke-width="3.4"/><ellipse cx="85.5" cy="255" rx="7.9" ry="2.6" fill="#fafafa" stroke="#d86c00" stroke-width="1.5"/><path d="M61 297 H76 L86 306.8 V331.5 H61 Z" fill="#fafafa" stroke="#555" stroke-width="1.4" stroke-linejoin="miter"/><path d="M76 297 V306.8 H86" fill="#fafafa" stroke="#555" stroke-width="1.3"/><path d="M73.8 316 L83 314.6 V323.4 H73.8 Z M84.4 314.4 L94.2 313 V323.4 H84.4 Z M73.8 324.6 H83 V333.4 L73.8 332 Z M84.4 324.6 H94.2 V334.8 L84.4 333.6 Z" fill="#fff" stroke="#fff" stroke-width="3.4"/><path d="M73.8 316 L83 314.6 V323.4 H73.8 Z M84.4 314.4 L94.2 313 V323.4 H84.4 Z M73.8 324.6 H83 V333.4 L73.8 332 Z M84.4 324.6 H94.2 V334.8 L84.4 333.6 Z" fill="#0e6fc4"/><path d="M61 356 H76 L86 365.8 V390.5 H61 Z" fill="#fafafa" stroke="#555" stroke-width="1.4" stroke-linejoin="miter"/><path d="M76 356 V365.8 H86" fill="#fafafa" stroke="#555" stroke-width="1.3"/><path d="M74 392.5 C70.5 392.5 70.5 386.5 74.5 386 C75 381 82 378.5 85 383 C88 381.5 91 383.5 90.8 386.5 C94.5 386.8 94.5 392.5 90.5 392.5 Z" fill="#fff" stroke="#fff" stroke-width="3.4"/><path d="M74 392.5 C70.5 392.5 70.5 386.5 74.5 386 C75 381 82 378.5 85 383 C88 381.5 91 383.5 90.8 386.5 C94.5 386.8 94.5 392.5 90.5 392.5 Z" fill="#fff" stroke="#2b88d8" stroke-width="1.3"/><path d="M61 415 H76 L86 424.8 V449.5 H61 Z" fill="#fafafa" stroke="#555" stroke-width="1.4" stroke-linejoin="miter"/><path d="M76 415 V424.8 H86" fill="#fafafa" stroke="#555" stroke-width="1.3"/><g fill="#fff" stroke="#fff" stroke-width="3.4"><circle cx="79.5" cy="436.3" r="2.8"/><circle cx="79.5" cy="447.5" r="3.8"/><circle cx="90.9" cy="447.5" r="2.7"/><path d="M79.5 439.3 V444 M83.5 447.5 H88"/></g><path d="M79.5 439.3 V444 M83.5 447.5 H88" stroke="#2b88d8" stroke-width="1.3"/><circle cx="79.5" cy="436.3" r="2.8" fill="#fff" stroke="#2b88d8" stroke-width="1.3"/><circle cx="79.5" cy="447.5" r="3.8" fill="#fff" stroke="#2b88d8" stroke-width="1.3"/><circle cx="90.9" cy="447.5" r="2.7" fill="#fff" stroke="#2b88d8" stroke-width="1.3"/><path d="M61 474 H76 L86 483.8 V508.5 H61 Z" fill="#fafafa" stroke="#555" stroke-width="1.4" stroke-linejoin="miter"/><path d="M76 474 V483.8 H86" fill="#fafafa" stroke="#555" stroke-width="1.3"/><path d="M57 505.6 V487.6 H70" fill="#fff" stroke="#fff" stroke-width="3.4"/><path d="M57 505.6 V487.6 H70" fill="none" stroke="#e48a2a" stroke-width="1.4"/><rect x="59.8" y="490.6" width="12.3" height="17.4" fill="#fff" stroke="#fff" stroke-width="3.4"/><rect x="59.8" y="490.6" width="12.3" height="17.4" fill="#f7d98c" stroke="#e07a10" stroke-width="1.5"/><rect x="57" y="536" width="22.5" height="22.600000000000023" fill="#fafafa" stroke="#555" stroke-width="1.4"/><rect x="57.7" y="536.7" width="21.1" height="3.4" fill="#c8c6c4"/><path d="M57 540.4 H79.5" stroke="#555" stroke-width="1.3"/><path d="M57 546.5 H79.5 M57 552.5 H79.5 M64.5 540.4 V558.6 M72.0 540.4 V558.6" stroke="#777" stroke-width="1.1"/><rect x="64" y="559.5" width="8" height="3" fill="#fff"/><rect x="68.8" y="547.5" width="22.2" height="22.3" fill="#fff" stroke="#fff" stroke-width="3.4"/><rect x="68.8" y="547.5" width="22.200000000000003" height="22.299999999999955" fill="#fafafa" stroke="#555" stroke-width="1.4"/><rect x="69.5" y="548.2" width="20.800000000000004" height="3.4" fill="#c8c6c4"/><path d="M68.8 551.9 H91" stroke="#555" stroke-width="1.3"/><path d="M68.8 557.9 H91 M68.8 563.8 H91 M76.2 551.9 V569.8 M83.6 551.9 V569.8" stroke="#777" stroke-width="1.1"/><path d="M54.3 564.9 H73.2 M65.6 557.4 L73.4 564.9 L65.6 572.4" fill="none" stroke="#fff" stroke-width="4"/><path d="M54.3 564.9 H73.2 M65.6 557.4 L73.4 564.9 L65.6 572.4" fill="none" stroke="#2b88d8" stroke-width="1.4"/><rect x="51.6" y="593.6" width="18.8" height="18.6" fill="#fafafa" stroke="#444" stroke-width="1.3"/><rect x="52.3" y="594.3" width="17.4" height="3.4" fill="#c0c0c0"/><path d="M51.6 598 H70.4 M51.6 602.4 H66 M51.6 607.2 H60 M57.8 598 V612 M64.2 598 V604" stroke="#777" stroke-width="1.1" fill="none"/><path d="M70.4 598 V600.5" stroke="#444" stroke-width="1.3"/><path d="M60 612.6 L59.6 608.8 L68.2 600.8 C69.2 599.9 70.6 600 71.2 600.9 C71.8 601.8 71.6 602.8 70.8 603.6 L62.2 611.6 Z" fill="#fff" stroke="#fff" stroke-width="2.6"/><path d="M60 612.4 L59.8 609 L68.4 601.2 C69.3 600.4 70.3 600.5 70.8 601.2 C71.3 602 71.1 602.7 70.4 603.4 L61.8 611.4 Z" fill="#fff" stroke="#2b88d8" stroke-width="1.4"/><path d="M62 608.8 L68.2 603.2" stroke="#2b88d8" stroke-width="1"/><path d="M53.8 632.6 H61.6 L68.2 639 V651.2 H53.8 Z" fill="#fafafa"/><path d="M60 651.2 H53.8 V632.6 H61.6 L68.2 639" fill="none" stroke="#444" stroke-width="1.3"/><path d="M61.6 632.6 V639 H68.2" fill="none" stroke="#444" stroke-width="1.3"/><path d="M65.40 640.80 L63.66 643.39 L60.55 643.60 L61.93 646.40 L60.55 649.20 L63.66 649.41 L65.40 652.00 L67.14 649.41 L70.25 649.20 L68.87 646.40 L70.25 643.60 L67.14 643.39 Z" fill="#fff" stroke="#fff" stroke-width="3.4" stroke-linejoin="round"/><path d="M65.40 640.80 L63.66 643.39 L60.55 643.60 L61.93 646.40 L60.55 649.20 L63.66 649.41 L65.40 652.00 L67.14 649.41 L70.25 649.20 L68.87 646.40 L70.25 643.60 L67.14 643.39 Z" fill="#fff" stroke="#2b88d8" stroke-width="1.3" stroke-linejoin="round"/><path d="M65.40 640.80 L63.66 643.39 L60.55 643.60 L61.93 646.40 L60.55 649.20 L63.66 649.41 L65.40 652.00 L67.14 649.41 L70.25 649.20 L68.87 646.40 L70.25 643.60 L67.14 643.39 Z" fill="#fff" stroke="#2b88d8" stroke-width="1.3" stroke-linejoin="round"/><circle cx="65.4" cy="646.4" r="1.5" fill="none" stroke="#2b88d8" stroke-width="1.1"/><rect x="54" y="668.6" width="14.2" height="18.6" fill="#fafafa" stroke="#555" stroke-width="1.3"/><rect x="57.2" y="672.8" width="3" height="3" fill="#999"/><rect x="57.2" y="679.4" width="3" height="3" fill="#999"/><path d="M61.6 674.3 H64.4 M61.6 680.9 H64.4" stroke="#999" stroke-width="1"/><path d="M315.6 190 L321.6 196 L315.6 202" fill="none" stroke="#333" stroke-width="1.2"/><path d="M315.6 249 L321.6 255 L315.6 261" fill="none" stroke="#333" stroke-width="1.2"/><path d="M315.6 308 L321.6 314 L315.6 320" fill="none" stroke="#333" stroke-width="1.2"/><path d="M315.6 367 L321.6 373 L315.6 379" fill="none" stroke="#333" stroke-width="1.2"/><path d="M315.6 426 L321.6 432 L315.6 438" fill="none" stroke="#333" stroke-width="1.2"/><path d="M315.6 485 L321.6 491 L315.6 497" fill="none" stroke="#333" stroke-width="1.2"/><path d="M315.6 548 L321.6 554 L315.6 560" fill="none" stroke="#333" stroke-width="1.2"/></svg>
<!-- ===== SUBMENU ===== -->
<div class="a" style="left:333px;top:167px;width:286px;height:357px;background:#fff;border:1px solid #c8c6c4;box-shadow:0 2px 5px rgba(0,0,0,0.2)"></div>
<div class="a" style="left:335px;top:228px;width:283px;height:59px;background:#d2d0ce"></div>
<div class="a mi" style="left:401.4px;top:193.9px">Из <u>к</u>ниги</div>
<div class="a mi" style="left:401.4px;top:253.4px">Из <u>т</u>екстового/CSV-файла</div>
<div class="a mi" style="left:401.4px;top:312.4px">И<u>з</u> XML</div>
<div class="a mi" style="left:401.4px;top:371.4px"><u>Ф</u>ормат JSON</div>
<div class="a mi" style="left:401.4px;top:430.4px">Из <u>п</u>апки</div>
<div class="a mi" style="left:401.4px;top:489.4px">Из <u>п</u>апки SharePoint</div>
<svg style="left:0;top:0" width="1184" height="874"><path d="M359 180.8 H374 L384 190.60000000000002 V215.3 H359 Z" fill="#fafafa" stroke="#555" stroke-width="1.4" stroke-linejoin="miter"/><path d="M374 180.8 V190.60000000000002 H384" fill="#fafafa" stroke="#555" stroke-width="1.3"/><rect x="374.3" y="201.0" width="17.8" height="17.4" rx="1.2" fill="#fff" stroke="#fff" stroke-width="3.4"/><rect x="374.3" y="201.0" width="17.8" height="17.4" rx="1.2" fill="#107c41"/><path d="M379.2 204.4 L387.2 215.0 M387.2 204.4 L379.2 215.0" stroke="#fff" stroke-width="2.1"/><path d="M359 240.3 H374 L384 250.10000000000002 V274.8 H359 Z" fill="#fafafa" stroke="#555" stroke-width="1.4" stroke-linejoin="miter"/><path d="M374 240.3 V250.10000000000002 H384" fill="#fafafa" stroke="#555" stroke-width="1.3"/><rect x="375.4" y="255.9" width="16" height="21" fill="#d2d0ce" stroke="#d2d0ce" stroke-width="3.4"/><rect x="375.4" y="255.9" width="16" height="21" fill="#fafafa" stroke="#555" stroke-width="1.4"/><path d="M378.6 260.7 H388 M378.6 264.5 H388 M378.6 268.3 H388 M378.6 272.1 H388" stroke="#888" stroke-width="1.1"/><path d="M359 299.3 H374 L384 309.1 V333.8 H359 Z" fill="#fafafa" stroke="#555" stroke-width="1.4" stroke-linejoin="miter"/><path d="M374 299.3 V309.1 H384" fill="#fafafa" stroke="#555" stroke-width="1.3"/><rect x="355.2" y="313.7" width="32.6" height="14.4" fill="#fff" stroke="#fff" stroke-width="3.4"/><rect x="355.2" y="313.7" width="32.6" height="14.4" fill="#fafafa" stroke="#2b88d8" stroke-width="1.5"/><path d="M363.8 316.90000000000003 L359.6 320.90000000000003 L363.8 324.90000000000003 M379.2 316.90000000000003 L383.4 320.90000000000003 L379.2 324.90000000000003" fill="none" stroke="#333" stroke-width="1.2"/><circle cx="371.4" cy="320.90000000000003" r="5" fill="#2b88d8"/><path d="M366.6 320.90000000000003 H376.2 M371.4 316.1 V325.7" stroke="#fff" stroke-width="0.8" stroke-dasharray="1.2 1"/><path d="M359 358.3 H374 L384 368.1 V392.8 H359 Z" fill="#fafafa" stroke="#555" stroke-width="1.4" stroke-linejoin="miter"/><path d="M374 358.3 V368.1 H384" fill="#fafafa" stroke="#555" stroke-width="1.3"/><rect x="355.2" y="372.7" width="32.6" height="14.4" fill="#fff" stroke="#fff" stroke-width="3.4"/><rect x="355.2" y="372.7" width="32.6" height="14.4" fill="#fafafa" stroke="#2b88d8" stroke-width="1.5"/><text x="357.3" y="383.7" font-family="Liberation Sans" font-size="11.8" fill="#333" textLength="27.6" lengthAdjust="spacingAndGlyphs">JSON</text><path d="M359 417.3 H374 L384 427.1 V451.8 H359 Z" fill="#fafafa" stroke="#555" stroke-width="1.4" stroke-linejoin="miter"/><path d="M374 417.3 V427.1 H384" fill="#fafafa" stroke="#555" stroke-width="1.3"/><path d="M371.8 454.1 V438.7 H379.2 L380.6 440.1 H391.4 V454.1 Z" fill="#fff" stroke="#fff" stroke-width="3.4"/><path d="M371.8 454.1 V438.7 H379.2 L380.6 440.1 H391.4 V454.1 Z" fill="#fafafa" stroke="#444" stroke-width="1.4"/><path d="M371.8 441.5 H379.2 L380.6 440.1" fill="none" stroke="#444" stroke-width="1.2"/><path d="M359 476.3 H374 L384 486.1 V510.8 H359 Z" fill="#fafafa" stroke="#555" stroke-width="1.4" stroke-linejoin="miter"/><path d="M374 476.3 V486.1 H384" fill="#fafafa" stroke="#555" stroke-width="1.3"/><rect x="374.3" y="496.3" width="17.6" height="17.2" rx="1.2" fill="#fff" stroke="#fff" stroke-width="3.4"/><rect x="374.3" y="496.3" width="17.6" height="17.2" rx="1.2" fill="#038387"/><text x="378.2" y="509.7" font-family="Liberation Sans" font-size="14" fill="#fff">S</text></svg>
<!-- ===== TOOLTIP ===== -->
<div class="a" style="left:443px;top:274px;width:248px;height:148px;background:#fff;border:1px solid #c8c6c4;box-shadow:0 2px 4px rgba(0,0,0,0.15)"></div>
<div class="a mi" style="left:457.4px;top:284.9px;color:#484644">Из текстового/CSV-файла</div>
<div class="a" style="left:457.4px;top:311.1px;font-size:15px;color:#666">Импорт данных из текстового</div>
<div class="a" style="left:457.4px;top:331.2px;font-size:15px;color:#666">файла, файла с</div>
<div class="a" style="left:457.4px;top:351.1px;font-size:15px;color:#666">разделителями-запятыми или</div>
<div class="a" style="left:457.4px;top:371.1px;font-size:15px;color:#666">текстового файла с</div>
<div class="a" style="left:457.4px;top:390.7px;font-size:15px;color:#666">разделителями-пробелами.</div>
</body></html>
